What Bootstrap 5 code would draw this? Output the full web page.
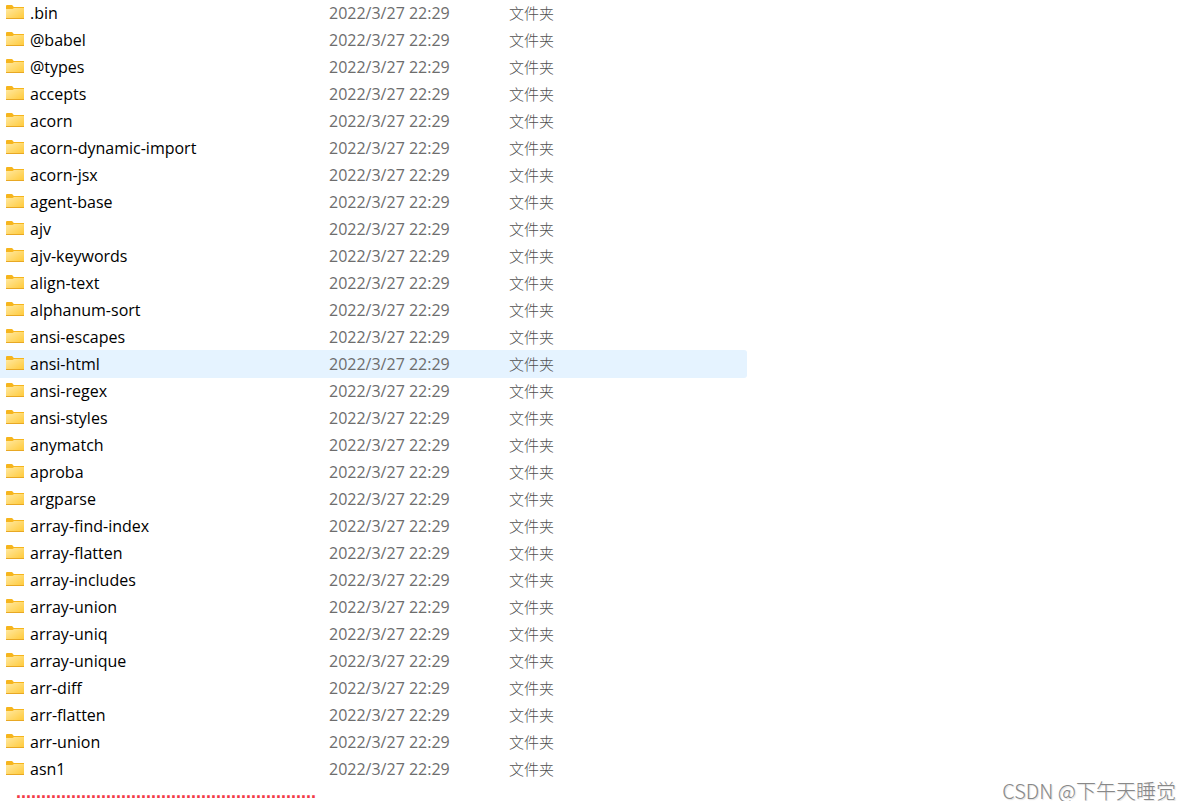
<!DOCTYPE html>
<html lang="zh-CN">
<head>
<meta charset="utf-8">
<meta name="viewport" content="width=device-width, initial-scale=1">
<title>node_modules</title>
<link href="https://cdn.jsdelivr.net/npm/bootstrap@5.3.0/dist/css/bootstrap.min.css" rel="stylesheet">
<style>
  body { background: #fff; color: #000; font-family: "Open Sans", "Noto Sans CJK SC", sans-serif; font-size: 16px; line-height: 27px; }
  .file-list { width: 62.7%; min-width: 560px; table-layout: fixed; border-collapse: separate; border-spacing: 0; }
  .file-list td { height: 27px; padding: 0; white-space: nowrap; }
  .file-list .name-col { width: 329px; }
  .file-list .date-col { width: 180px; }
  .file-list .meta { color: #6d6d6d; }
  .file-list .kind { color: #505050; font-size: 15px; font-weight: 300; }
  .file-list .hovered td { background: #e5f3ff; box-shadow: 0 -1px #e5f3ff; }
  .file-list .hovered td:last-child { border-radius: 0 3px 3px 0; }
  .folder { width: 18px; height: 15px; margin: 0 6px 5px; }
  .more { color: #f23a45; font: bold 18px/18px "Liberation Sans", sans-serif; padding-left: 16px; }
  .watermark { color: #888; font-family: "Noto Sans CJK SC", sans-serif; font-size: 20px; font-weight: 300; line-height: 16px; padding-right: 15px; text-shadow: 1px 1px 1px #ddd; }
</style>
</head>
<body>
<svg width="0" height="0" class="position-absolute" aria-hidden="true">
  <defs>
    <linearGradient id="front" x1="0" y1="0" x2="1" y2="1"><stop offset="0" stop-color="#ffe9a2"/><stop offset="1" stop-color="#ffc937"/></linearGradient>
    <symbol id="folder" viewBox="0 0 18 15">
      <path d="M0 1Q0 0 1 0H6.1L7.8 2H18V7H0Z" fill="#f6b51d"/>
      <path d="M0 4H6.5L8 3H18V14H0Z" fill="url(#front)"/>
      <path d="M0 13H18V14H0Z" fill="#e8a824"/>
    </symbol>
  </defs>
</svg>
<main>
  <table class="file-list"><colgroup><col class="name-col"><col class="date-col"><col></colgroup><tbody id="files"></tbody></table>
</main>
<footer class="d-flex justify-content-between align-items-start">
  <div class="more" id="more"></div>
  <div class="watermark">CSDN @下午天睡觉</div>
</footer>
<script>
  const names = [".bin", "@babel", "@types", "accepts", "acorn", "acorn-dynamic-import", "acorn-jsx", "agent-base", "ajv", "ajv-keywords", "align-text", "alphanum-sort", "ansi-escapes", "ansi-html", "ansi-regex", "ansi-styles", "anymatch", "aproba", "argparse", "array-find-index", "array-flatten", "array-includes", "array-union", "array-uniq", "array-unique", "arr-diff", "arr-flatten", "arr-union", "asn1"];
  document.getElementById("files").innerHTML = names.map(name => `
    <tr class="${name === "ansi-html" ? "hovered" : ""}">
      <td><svg class="folder" aria-hidden="true"><use href="#folder"/></svg>${name}</td>
      <td class="meta">2022/3/27 22:29</td>
      <td class="meta kind">文件夹</td>
    </tr>`).join("");
  document.getElementById("more").textContent = ".".repeat(60);
</script>
<script src="https://cdn.jsdelivr.net/npm/bootstrap@5.3.0/dist/js/bootstrap.bundle.min.js"></script>
</body>
</html>
